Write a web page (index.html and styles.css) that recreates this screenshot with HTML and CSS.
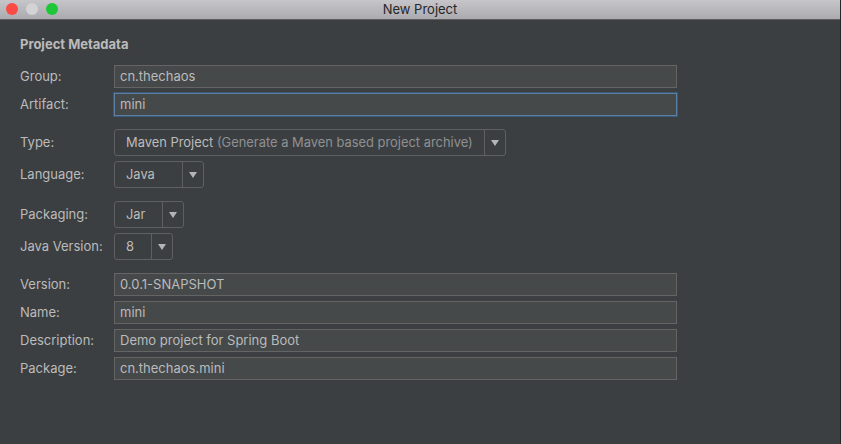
FILE: index.html
```html
<!DOCTYPE html>
<html lang="en">
<head>
<meta charset="utf-8">
<title>New Project</title>
<link rel="stylesheet" href="styles.css">
</head>
<body>
<div class="window">
  <div class="titlebar">
    <div class="lights">
      <span class="light light-close"></span>
      <span class="light light-min"></span>
      <span class="light light-max"></span>
    </div>
    <div class="title">New Project</div>
  </div>
  <div class="content">
    <div class="heading">Project Metadata</div>
    <div class="section">
      <label class="label">Group:</label>
      <div class="input">cn.thechaos</div>
      <label class="label">Artifact:</label>
      <div class="input input-focus">mini</div>
    </div>
    <div class="section section-combo">
      <label class="label">Type:</label>
      <div class="combo"><span class="combo-value">Maven Project <span class="hint">(Generate a Maven based project archive)</span></span><span class="combo-arrow"><span class="tri"></span></span></div>
      <label class="label">Language:</label>
      <div class="combo"><span class="combo-value w-lang">Java</span><span class="combo-arrow"><span class="tri"></span></span></div>
    </div>
    <div class="section section-combo">
      <label class="label">Packaging:</label>
      <div class="combo"><span class="combo-value w-pack">Jar</span><span class="combo-arrow"><span class="tri"></span></span></div>
      <label class="label">Java Version:</label>
      <div class="combo"><span class="combo-value w-ver">8</span><span class="combo-arrow"><span class="tri"></span></span></div>
    </div>
    <div class="section">
      <label class="label">Version:</label>
      <div class="input">0.0.1-SNAPSHOT</div>
      <label class="label">Name:</label>
      <div class="input">mini</div>
      <label class="label">Description:</label>
      <div class="input">Demo project for Spring Boot</div>
      <label class="label">Package:</label>
      <div class="input">cn.thechaos.mini</div>
    </div>
  </div>
</div>
</body>
</html>
```

FILE: styles.css
```css
* { box-sizing: border-box; }
html, body { margin: 0; padding: 0; background: #3c3f41; }
body { font-family: Inter, "Noto Sans", "Liberation Sans", sans-serif; font-size: 13px; }

.window {
  width: 841px;
  height: 444px;
  display: flex;
  flex-direction: column;
  background: #3c3f41;
  border-right: 1px solid #26282a;
  overflow: hidden;
}

.titlebar {
  height: 20px;
  flex: none;
  position: relative;
  display: flex;
  align-items: center;
  justify-content: center;
  background: linear-gradient(#c6c5ca, #abaaaf);
  border-bottom: 1px solid #5f5f62;
}
.lights {
  position: absolute;
  left: 6px;
  top: 3px;
  display: flex;
  gap: 8px;
}
.light { width: 12px; height: 12px; border-radius: 50%; display: block; }
.light-close { background: #fc4a45; }
.light-min { background: #d3d3d5; }
.light-max { background: #1ec737; }
.title { color: #262626; font-size: 13px; line-height: 19px; }

.content {
  display: flex;
  flex-direction: column;
  gap: 13px;
  padding: 16px 0 0 20px;
  color: #bbbbbb;
}
.heading { font-weight: 700; font-size: 13px; line-height: 16px; color: #bbbbbb; }

.section {
  display: grid;
  grid-template-columns: 94px 563px;
  row-gap: 5px;
  align-items: center;
}
.label { font-size: 13px; line-height: 23px; color: #bbbbbb; }

.input {
  height: 23px;
  line-height: 21px;
  padding: 0 5px;
  background: #45494a;
  border: 1px solid #646464;
  color: #bbbbbb;
  white-space: nowrap;
}
.input-focus {
  border-color: #5a7fa6;
  box-shadow: 0 0 0 1px #3c5a78;
}

.combo {
  justify-self: start;
  height: 27px;
  display: flex;
  border: 1px solid #5d5f61;
  border-radius: 3px;
  background: #3c3f41;
}
.combo-value {
  padding: 0 11px 0 11px;
  line-height: 25px;
  font-size: 12.9px;
  color: #bbbbbb;
  white-space: nowrap;
}
.hint { color: #8f9091; }
.w-lang { width: 67px; }
.w-pack { width: 47px; }
.w-ver { width: 36px; }
.combo-arrow {
  width: 21px;
  border-left: 1px solid #5d5f61;
  display: flex;
  align-items: center;
  justify-content: center;
}
.tri {
  width: 0;
  height: 0;
  border-left: 4px solid transparent;
  border-right: 4px solid transparent;
  border-top: 6px solid #b4b4b4;
}
```
